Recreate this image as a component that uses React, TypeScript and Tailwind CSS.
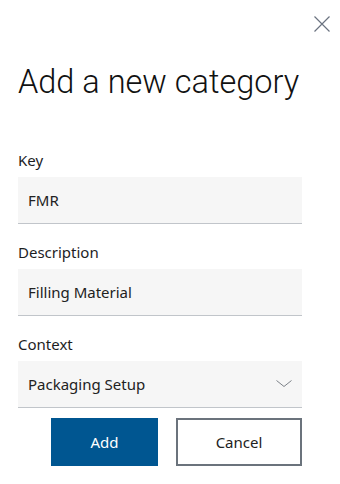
import { useState } from "react";

function Field({ label, value, select }: { label: string; value: string; select?: boolean }) {
  return (
    <div className="flex flex-col">
      <label className="h-5 text-[15px] leading-5 text-[#1d1d1f]">{label}</label>
      <div className="mt-[7px] flex h-[47px] items-center justify-between border-b border-[#c1c5ca] bg-[#f6f6f6] pl-[10px] pr-[10px]">
        <span className="text-[15px] text-[#222]">{value}</span>
        {select && (
          <svg width="16" height="8" viewBox="0 0 16 8" fill="none">
            <path d="M0.5 0.5 L8 6.5 L15.5 0.5" stroke="#7d8389" strokeWidth="1" />
          </svg>
        )}
      </div>
    </div>
  );
}

export default function App() {
  const [open] = useState(true);
  if (!open) return null;
  return (
    <div className="relative h-[484px] w-[340px] overflow-hidden bg-white font-['Noto_Sans',sans-serif]">
      <button className="absolute right-[10px] top-[16px] p-0" aria-label="Close">
        <svg width="16" height="16" viewBox="0 0 16 16" fill="none">
          <path d="M0.5 0.5 L15.5 15.5 M15.5 0.5 L0.5 15.5" stroke="#6b7380" strokeWidth="1.2" />
        </svg>
      </button>

      <div className="flex flex-col pl-[18px] pr-[38px] pt-[62px]">
        <h1 className="whitespace-nowrap font-['Roboto',sans-serif] text-[32.5px] font-light leading-[40px] text-[#111]">
          Add a new category
        </h1>

        <div className="mt-[48px] flex flex-col gap-[18px]">
          <Field label="Key" value="FMR" />
          <Field label="Description" value="Filling Material" />
          <Field label="Context" value="Packaging Setup" select />
        </div>

        <div className="mt-[10px] flex justify-end gap-[18px]">
          <button className="h-[48px] w-[107px] bg-[#005691] text-[15px] text-white">Add</button>
          <button className="h-[48px] w-[126px] border-2 border-[#6b737c] bg-white text-[15px] text-[#222]">
            Cancel
          </button>
        </div>
      </div>
    </div>
  );
}
